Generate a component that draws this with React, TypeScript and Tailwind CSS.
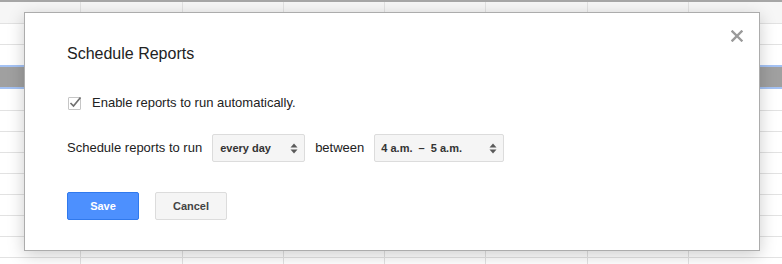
import React from "react";

const colWidths = [81, 102, 101, 101, 101, 102, 101, 93];

function GridRow({ h, className = "" }: { h: string; className?: string }) {
  return (
    <div className={`flex shrink-0 border-b border-[#e2e2e2] ${h} ${className}`}>
      {colWidths.map((w, i) => (
        <div
          key={i}
          className={`h-full shrink-0 ${i < colWidths.length - 1 ? "border-r border-[#e2e2e2]" : ""}`}
          style={{ width: w }}
        />
      ))}
    </div>
  );
}

function Arrows() {
  return (
    <svg width="8" height="11" viewBox="0 0 8 11" className="shrink-0">
      <path d="M4 0.5 L7.5 4.5 L0.5 4.5 Z" fill="#5a5a5a" />
      <path d="M4 10.5 L7.5 6.5 L0.5 6.5 Z" fill="#5a5a5a" />
    </svg>
  );
}

export default function App() {
  return (
    <div className="relative w-[782px] h-[264px] overflow-hidden bg-white font-['Liberation_Sans',Arial,sans-serif]">
      {/* spreadsheet background */}
      <div className="flex flex-col">
        <div className="h-[2px] shrink-0 bg-[#a6a6a6]" />
        <GridRow h="h-[22px]" className="bg-[#f6f6f6]" />
        <GridRow h="h-[21px]" />
        <GridRow h="h-[20px]" className="border-b-0" />
        <div className="h-[24px] shrink-0 border-y-2 border-[#a4c2f4] bg-[#a0a0a0]" />
        <GridRow h="h-[22px]" />
        <GridRow h="h-[21px]" />
        <GridRow h="h-[21px]" />
        <GridRow h="h-[21px]" />
        <GridRow h="h-[21px]" />
        <GridRow h="h-[21px]" />
        <GridRow h="h-[21px]" />
        <GridRow h="h-[21px]" />
        <GridRow h="h-[21px]" />
      </div>

      {/* dialog */}
      <div className="absolute left-[24px] top-[12px] w-[736px] h-[239px] bg-white border border-[#acacac] shadow-[0_4px_16px_rgba(0,0,0,0.2)] flex flex-col pt-[31px] pb-[30px] px-[42px]">
        <button className="absolute top-[17px] right-[16px] w-[12px] h-[12px]">
          <svg width="12" height="12" viewBox="0 0 12 12">
            <path d="M1.5 1.5 L10.5 10.5 M10.5 1.5 L1.5 10.5" stroke="#9a9a9a" strokeWidth="2.4" strokeLinecap="square" />
          </svg>
        </button>

        <div className="text-[16px] leading-[20px] text-[#222222]">Schedule Reports</div>

        <div className="mt-[31px] flex items-center h-[16px]">
          <div className="relative w-[13px] h-[13px] ml-[1px] border border-[#c6c6c6] rounded-[1px] bg-white shrink-0">
            <svg width="15" height="15" viewBox="0 0 15 15" className="absolute left-[-1px] top-[-3px]">
              <path d="M2.5 8 L5.5 11 L12.5 2.5" stroke="#707070" strokeWidth="1.7" fill="none" />
            </svg>
          </div>
          <span className="ml-[11px] text-[13px] leading-[16px] text-[#222222]">
            Enable reports to run automatically.
          </span>
        </div>

        <div className="mt-[23px] flex items-center h-[28px]">
          <span className="text-[13px] leading-[16px] text-[#222222]">Schedule reports to run</span>
          <div className="ml-[10px] w-[93px] h-[28px] flex items-center justify-between pl-[7px] pr-[6px] bg-[#f5f5f5] border border-[#dcdcdc] rounded-[2px]">
            <span className="text-[11px] font-bold text-[#333333]">every day</span>
            <Arrows />
          </div>
          <span className="ml-[10px] text-[13px] leading-[16px] text-[#222222]">between</span>
          <div className="ml-[10px] w-[130px] h-[28px] flex items-center justify-between pl-[6px] pr-[6px] bg-[#f5f5f5] border border-[#dcdcdc] rounded-[2px]">
            <span className="text-[11px] font-bold text-[#333333] whitespace-pre">{"4 a.m.  –  5 a.m."}</span>
            <Arrows />
          </div>
        </div>

        <div className="mt-[30px] flex items-center gap-[16px]">
          <button className="w-[72px] h-[28px] rounded-[2px] bg-[#4d90fe] border border-[#3079ed] text-white text-[11px] font-bold">
            Save
          </button>
          <button className="w-[72px] h-[28px] rounded-[2px] bg-[#f5f5f5] border border-[#dcdcdc] text-[#444444] text-[11px] font-bold">
            Cancel
          </button>
        </div>
      </div>
    </div>
  );
}
